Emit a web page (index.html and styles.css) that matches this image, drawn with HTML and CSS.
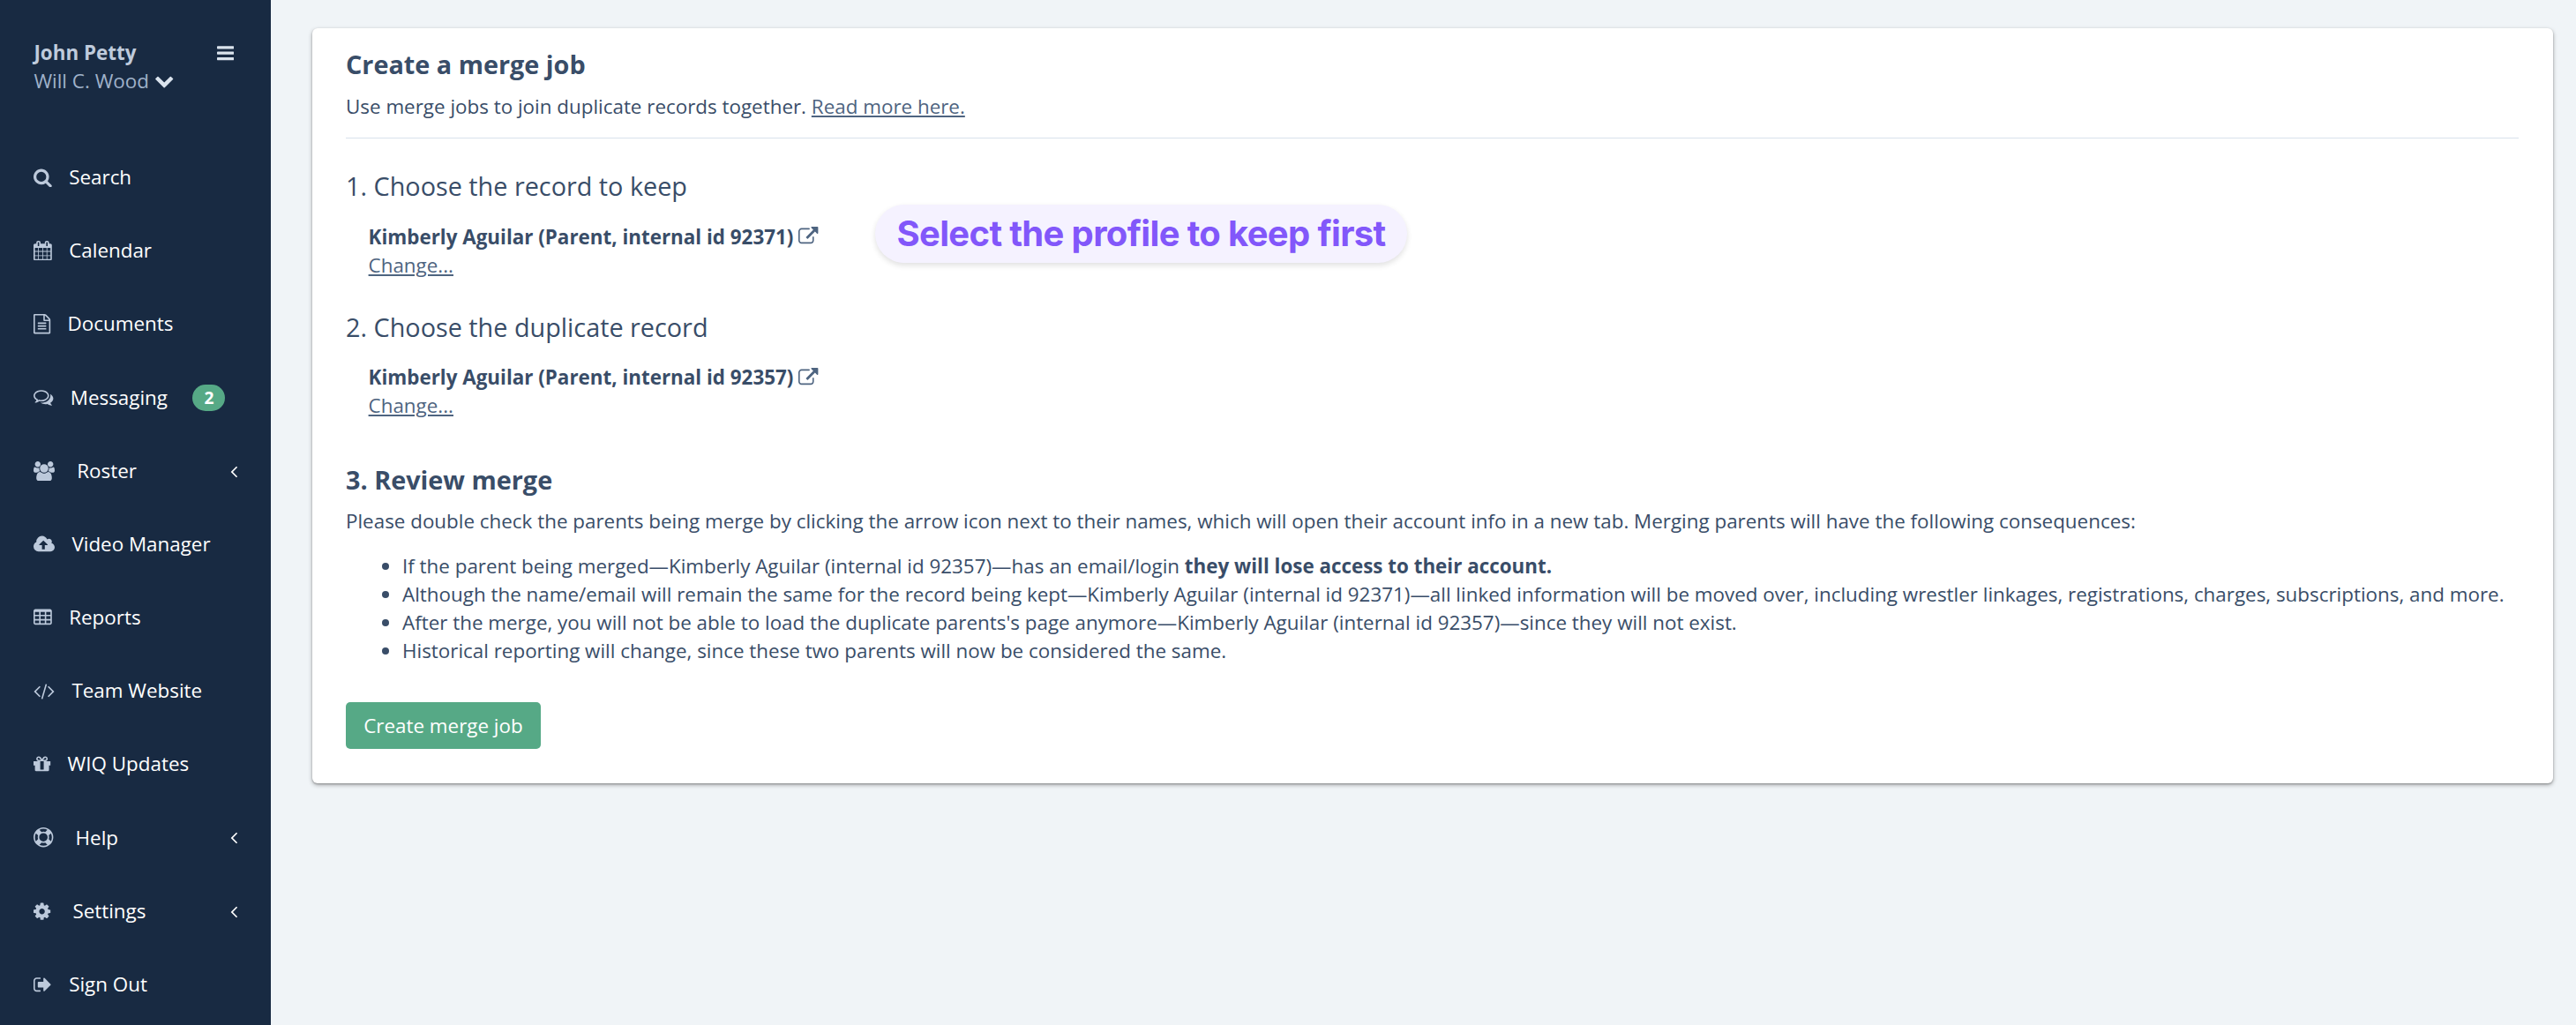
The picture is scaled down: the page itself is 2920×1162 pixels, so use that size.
FILE: index.html
```
<!DOCTYPE html>
<html lang="en">

<head>
    <meta charset="utf-8">
    <title>Create a merge job</title>
    <link rel="stylesheet" href="styles.css">
</head>

<body>
    <div class="sidebar">
        <div class="profile">
            <div>
                <div class="user-name">John Petty</div>
                <div class="team-name">Will C. Wood <svg class="icon chevron" viewBox="0 0 1792 1792"><path d="M1683 808l-742 741q-19 19-45 19t-45-19l-742-741q-19-19-19-45.500t19-45.500l166-165q19-19 45-19t45 19l531 531 531-531q19-19 45-19t45 19l166 165q19 19 19 45.500t-19 45.500z"/></svg></div>
            </div>
            <svg class="icon menu-toggle" viewBox="128 0 1536 1792"><path d="M1664 1344v128q0 26-19 45t-45 19h-1408q-26 0-45-19t-19-45v-128q0-26 19-45t45-19h1408q26 0 45 19t19 45zm0-512v128q0 26-19 45t-45 19h-1408q-26 0-45-19t-19-45v-128q0-26 19-45t45-19h1408q26 0 45 19t19 45zm0-512v128q0 26-19 45t-45 19h-1408q-26 0-45-19t-19-45v-128q0-26 19-45t45-19h1408q26 0 45 19t19 45z"/></svg>
        </div>

        <ul class="nav">
            <li>
                <svg class="icon w-1664" viewBox="64 0 1664 1792"><path d="M1216 832q0-185-131.500-316.500t-316.500-131.500-316.500 131.500-131.500 316.500 131.500 316.500 316.500 131.500 316.500-131.500 131.500-316.500zm512 832q0 52-38 90t-90 38q-54 0-90-38l-343-342q-179 124-399 124-143 0-273.500-55.500t-225-150-150-225-55.500-273.500 55.500-273.500 150-225 225-150 273.500-55.500 273.500 55.500 225 150 150 225 55.500 273.500q0 220-124 399l343 343q37 37 37 90z"/></svg>
                <span>Search</span>
            </li>
            <li>
                <svg class="icon w-1664" viewBox="64 0 1664 1792"><path d="M192 1664h288v-288h-288v288zm352 0h320v-288h-320v288zm-352-352h288v-320h-288v320zm352 0h320v-320h-320v320zm-352-384h288v-288h-288v288zm736 736h320v-288h-320v288zm-384-736h320v-288h-320v288zm768 736h288v-288h-288v288zm-384-352h320v-320h-320v320zm-352-864v-288q0-13-9.500-22.500t-22.500-9.500h-64q-13 0-22.500 9.500t-9.500 22.500v288q0 13 9.500 22.500t22.500 9.500h64q13 0 22.500-9.500t9.500-22.500zm736 864h288v-320h-288v320zm-384-384h320v-288h-320v288zm384 0h288v-288h-288v288zm32-480v-288q0-13-9.500-22.500t-22.500-9.500h-64q-13 0-22.500 9.500t-9.500 22.500v288q0 13 9.500 22.500t22.500 9.500h64q13 0 22.500-9.500t9.500-22.500zm384-64v1280q0 52-38 90t-90 38h-1408q-52 0-90-38t-38-90v-1280q0-52 38-90t90-38h128v-96q0-66 47-113t113-47h64q66 0 113 47t47 113v96h384v-96q0-66 47-113t113-47h64q66 0 113 47t47 113v96h128q52 0 90 38t38 90z"/></svg>
                <span>Calendar</span>
            </li>
            <li>
                <svg class="icon w-1536" viewBox="128 0 1536 1792"><path d="M1596 380q28 28 48 76t20 88v1152q0 40-28 68t-68 28h-1344q-40 0-68-28t-28-68v-1600q0-40 28-68t68-28h896q40 0 88 20t76 48zm-444-244v376h376q-10-29-22-41l-313-313q-12-12-41-22zm384 1528v-1024h-416q-40 0-68-28t-28-68v-416h-768v1536h1280zm-1024-864q0-14 9-23t23-9h704q14 0 23 9t9 23v64q0 14-9 23t-23 9h-704q-14 0-23-9t-9-23v-64zm736 224q14 0 23 9t9 23v64q0 14-9 23t-23 9h-704q-14 0-23-9t-9-23v-64q0-14 9-23t23-9h704zm0 256q14 0 23 9t9 23v64q0 14-9 23t-23 9h-704q-14 0-23-9t-9-23v-64q0-14 9-23t23-9h704z"/></svg>
                <span>Documents</span>
            </li>
            <li>
                <svg class="icon" viewBox="0 0 1792 1792"><path d="M704 384q-153 0-286 52t-211.500 141-78.500 191q0 82 53 158t149 132l97 56-35 84q34-20 62-39l44-31 53 10q78 14 153 14 153 0 286-52t211.500-141 78.500-191-78.500-191-211.500-141-286-52zm0-128q191 0 353.500 68.500t256.500 186.500 94 257-94 257-256.500 186.500-353.500 68.500q-86 0-176-16-124 88-278 128-36 9-86 16h-3q-11 0-20.500-8t-11.500-21q-1-3-1-6.500t.5-6.500 2-6l2.500-5 3.500-5.500 4-5 4.500-5 4-4.500q5-6 23-25t26-29.500 22.500-29 25-38.500 20.500-44q-124-72-195-177t-71-224q0-139 94-257t256.500-186.500 353.500-68.500zm822 1169q10 24 20.500 44t25 38.500 22.500 29 26 29.500 23 25q1 1 4 4.500t4.500 5 4 5 3.500 5.500l2.500 5 2 6 .5 6.500-1 6.500q-3 14-13 22t-22 7q-50-7-86-16-154-40-278-128-90 16-176 16-271 0-472-132 58 4 88 4 161 0 309-45t264-129q125-92 192-212t67-254q0-77-23-152 129 71 204 178t75 230q0 120-71 224.500t-195 176.500z"/></svg>
                <span>Messaging</span>
                <span class="badge">2</span>
            </li>
            <li class="has-children">
                <svg class="icon w-1920" viewBox="-64 0 1920 1792"><path d="M529 896q-162 5-265 128h-134q-82 0-138-40.500t-56-118.500q0-353 124-353 6 0 43.500 21t97.500 42.500 119 21.500q67 0 133-23-5 37-5 66 0 139 81 256zm1071 637q0 120-73 189.500t-194 69.500h-874q-121 0-194-69.500t-73-189.500q0-53 3.500-103.500t14-109 26.500-108.500 43-97.500 62-81 85.500-53.500 111.500-20q10 0 43 21.500t73 48 107 48 135 21.500 135-21.500 107-48 73-48 43-21.500q61 0 111.500 20t85.500 53.500 62 81 43 97.500 26.500 108.500 14 109 3.500 103.500zm-1024-1277q0 106-75 181t-181 75-181-75-75-181 75-181 181-75 181 75 75 181zm704 384q0 159-112.500 271.500t-271.500 112.500-271.500-112.500-112.500-271.500 112.500-271.500 271.500-112.500 271.500 112.500 112.500 271.500zm576 225q0 78-56 118.500t-138 40.500h-134q-103-123-265-128 81-117 81-256 0-29-5-66 66 23 133 23 59 0 119-21.500t97.500-42.500 43.500-21q124 0 124 353zm-128-609q0 106-75 181t-181 75-181-75-75-181 75-181 181-75 181 75 75 181z"/></svg>
                <span>Roster</span>
                <svg class="icon angle" viewBox="0 0 1792 1792"><path d="M1203 544q0 13-10 23l-393 393 393 393q10 10 10 23t-10 23l-50 50q-10 10-23 10t-23-10l-466-466q-10-10-10-23t10-23l466-466q10-10 23-10t23 10l50 50q10 10 10 23z"/></svg>
            </li>
            <li>
                <svg class="icon w-1920" viewBox="0 0 1920 1792"><path d="M1280 928q0-14-9-23l-352-352q-9-9-23-9t-23 9l-351 351q-10 12-10 24 0 14 9 23t23 9h224v352q0 13 9.500 22.500t22.500 9.500h192q13 0 22.500-9.500t9.500-22.500v-352h224q13 0 22.500-9.500t9.500-22.500zm640 224q0 159-112.500 271.500t-271.500 112.500h-1088q-185 0-316.500-131.500t-131.500-316.500q0-130 70-240t188-165q-2-30-2-43 0-212 150-362t362-150q156 0 285.500 87t188.500 231q71-62 166-62 106 0 181 75t75 181q0 76-41 138 130 31 213.500 135.500t83.500 238.500z"/></svg>
                <span>Video Manager</span>
            </li>
            <li>
                <svg class="icon w-1664" viewBox="0 0 1664 1792"><path fill-rule="evenodd" d="M160 128h1344q66 0 113 47t47 113v1088q0 66-47 113t-113 47h-1344q-66 0-113-47t-47-113v-1088q0-66 47-113t113-47zM128 384v256h384v-256zM640 384v256h384v-256zM1152 384v256h384v-256zM128 768v256h384v-256zM640 768v256h384v-256zM1152 768v256h384v-256zM128 1152v256h384v-256zM640 1152v256h384v-256zM1152 1152v256h384v-256z"/></svg>
                <span>Reports</span>
            </li>
            <li>
                <svg class="icon w-1920" viewBox="0 0 1920 1792"><path d="M617 1399l-50 50q-10 10-23 10t-23-10l-466-466q-10-10-10-23t10-23l466-466q10-10 23-10t23 10l50 50q10 10 10 23t-10 23l-393 393 393 393q10 10 10 23t-10 23zm591-1067l-373 1291q-4 13-15.500 19.500t-23.500 2.500l-62-17q-13-4-19.500-15.500t-2.500-24.500l373-1291q4-13 15.500-19.500t23.500-2.500l62 17q13 4 19.500 15.500t2.500 24.500zm657 651l-466 466q-10 10-23 10t-23-10l-50-50q-10-10-10-23t10-23l393-393-393-393q-10-10-10-23t10-23l50-50q10-10 23-10t23 10l466 466q10 10 10 23t-10 23z"/></svg>
                <span>Team Website</span>
            </li>
            <li>
                <svg class="icon w-1536" viewBox="128 0 1536 1792"><path d="M1056 1356v-716h-320v716q0 25 18 38.500t46 13.500h192q28 0 46-13.500t18-38.500zm-456-844h195l-126-161q-26-31-69-31-40 0-68 28t-28 68 28 68 68 28zm688-96q0-40-28-68t-68-28q-43 0-69 31l-125 161h194q40 0 68-28t28-68zm376 256v320q0 14-9 23t-23 9h-96v416q0 40-28 68t-68 28h-1088q-40 0-68-28t-28-68v-416h-96q-14 0-23-9t-9-23v-320q0-14 9-23t23-9h440q-93 0-158.500-65.500t-65.500-158.500 65.500-158.500 158.500-65.500q107 0 168 77l128 165 128-165q61-77 168-77 93 0 158.500 65.500t65.500 158.500-65.500 158.500-158.500 65.500h440q14 0 23 9t9 23z"/></svg>
                <span>WIQ Updates</span>
            </li>
            <li class="has-children">
                <svg class="icon" viewBox="0 0 1792 1792"><path d="M896 0q182 0 348 71t286 191 191 286 71 348-71 348-191 286-286 191-348 71-348-71-286-191-191-286-71-348 71-348 191-286 286-191 348-71zm0 128q-190 0-361 90l194 194q82-28 167-28t167 28l194-194q-171-90-361-90zm-678 1129l194-194q-28-82-28-167t28-167l-194-194q-90 171-90 361t90 361zm678 407q190 0 361-90l-194-194q-82 28-167 28t-167-28l-194 194q171 90 361 90zm0-384q159 0 271.500-112.500t112.500-271.500-112.500-271.500-271.500-112.500-271.500 112.500-112.500 271.500 112.500 271.500 271.500 112.500zm484-217l194 194q90-171 90-361t-90-361l-194 194q28 82 28 167t-28 167z"/></svg>
                <span>Help</span>
                <svg class="icon angle" viewBox="0 0 1792 1792"><path d="M1203 544q0 13-10 23l-393 393 393 393q10 10 10 23t-10 23l-50 50q-10 10-23 10t-23-10l-466-466q-10-10-10-23t10-23l466-466q10-10 23-10t23 10l50 50q10 10 10 23z"/></svg>
            </li>
            <li class="has-children">
                <svg class="icon w-1536" viewBox="128 0 1536 1792"><path d="M1152 896q0-106-75-181t-181-75-181 75-75 181 75 181 181 75 181-75 75-181zm512-109v222q0 12-8 23t-20 13l-185 28q-19 54-39 91 35 50 107 138 10 12 10 25t-9 23q-27 37-99 108t-94 71q-12 0-26-9l-138-108q-44 23-91 38-16 136-29 186-7 28-36 28h-222q-14 0-24.500-8.500t-11.500-21.500l-28-184q-49-16-90-37l-141 107q-10 9-25 9-14 0-25-11-126-114-165-168-7-10-7-23 0-12 8-23 15-21 51-66.500t54-70.500q-27-50-41-99l-183-27q-13-2-21-12.500t-8-23.500v-222q0-12 8-23t19-13l186-28q14-46 39-92-40-57-107-138-10-12-10-24 0-10 9-23 26-36 98.500-107.500t94.500-71.500q13 0 26 10l138 107q44-23 91-38 16-136 29-186 7-28 36-28h222q14 0 24.500 8.500t11.500 21.500l28 184q49 16 90 37l142-107q9-9 24-9 13 0 25 10 129 119 165 170 7 8 7 22 0 12-8 23-15 21-51 66.500t-54 70.500q26 50 41 98l183 28q13 2 21 12.500t8 23.500z"/></svg>
                <span>Settings</span>
                <svg class="icon angle" viewBox="0 0 1792 1792"><path d="M1203 544q0 13-10 23l-393 393 393 393q10 10 10 23t-10 23l-50 50q-10 10-23 10t-23-10l-466-466q-10-10-10-23t10-23l466-466q10-10 23-10t23 10l50 50q10 10 10 23z"/></svg>
            </li>
            <li>
                <svg class="icon w-1664" viewBox="64 0 1664 1792"><path d="M704 1440q0 4 1 20t.5 26.500-3 23.500-10 19.500-20.500 6.500h-320q-119 0-203.500-84.500t-84.500-203.500v-704q0-119 84.500-203.500t203.500-84.500h320q13 0 22.500 9.500t9.500 22.500q0 4 1 20t.5 26.500-3 23.500-10 19.500-20.500 6.500h-320q-66 0-113 47t-47 113v704q0 66 47 113t113 47h312l11.500 1 11.500 3 8 5.500 7 9 2 13.500zm928-544q0 26-19 45l-544 544q-19 19-45 19t-45-19-19-45v-288h-448q-26 0-45-19t-19-45v-384q0-26 19-45t45-19h448v-288q0-26 19-45t45-19 45 19l544 544q19 19 19 45z"/></svg>
                <span>Sign Out</span>
            </li>
        </ul>
    </div>

    <div class="content">
        <div class="card">
            <h3>Create a merge job</h3>
            <p class="intro">Use merge jobs to join duplicate records together. <a href="#">Read more here.</a></p>
            <hr>

            <h3 class="step">1. Choose the record to keep</h3>
            <div class="record">
                <strong>Kimberly Aguilar (Parent, internal id 92371)</strong>
                <svg class="icon external" viewBox="0 0 1792 1792"><path d="M1408 928v320q0 119-84.500 203.500t-203.500 84.500h-832q-119 0-203.500-84.500t-84.500-203.500v-832q0-119 84.500-203.500t203.500-84.500h704q14 0 23 9t9 23v64q0 14-9 23t-23 9h-704q-66 0-113 47t-47 113v832q0 66 47 113t113 47h832q66 0 113-47t47-113v-320q0-14 9-23t23-9h64q14 0 23 9t9 23zm384-864v512q0 26-19 45t-45 19-45-19l-176-176-652 652q-10 10-23 10t-23-10l-114-114q-10-10-10-23t10-23l652-652-176-176q-19-19-19-45t19-45 45-19h512q26 0 45 19t19 45z"/></svg>
                <br>
                <a href="#">Change...</a>
            </div>

            <h3 class="step">2. Choose the duplicate record</h3>
            <div class="record">
                <strong>Kimberly Aguilar (Parent, internal id 92357)</strong>
                <svg class="icon external" viewBox="0 0 1792 1792"><path d="M1408 928v320q0 119-84.500 203.500t-203.500 84.500h-832q-119 0-203.500-84.500t-84.500-203.500v-832q0-119 84.500-203.500t203.500-84.500h704q14 0 23 9t9 23v64q0 14-9 23t-23 9h-704q-66 0-113 47t-47 113v832q0 66 47 113t113 47h832q66 0 113-47t47-113v-320q0-14 9-23t23-9h64q14 0 23 9t9 23zm384-864v512q0 26-19 45t-45 19-45-19l-176-176-652 652q-10 10-23 10t-23-10l-114-114q-10-10-10-23t10-23l652-652-176-176q-19-19-19-45t19-45 45-19h512q26 0 45 19t19 45z"/></svg>
                <br>
                <a href="#">Change...</a>
            </div>

            <h3 class="review">3. Review merge</h3>
            <p>Please double check the parents being merge by clicking the arrow icon next to their names, which will open their account info in a new tab. Merging parents will have the following consequences:</p>
            <ul class="consequences">
                <li>If the parent being merged—Kimberly Aguilar (internal id 92357)—has an email/login <strong>they will lose access to their account.</strong></li>
                <li>Although the name/email will remain the same for the record being kept—Kimberly Aguilar (internal id 92371)—all linked information will be moved over, including wrestler linkages, registrations, charges, subscriptions, and more.</li>
                <li>After the merge, you will not be able to load the duplicate parents's page anymore—Kimberly Aguilar (internal id 92357)—since they will not exist.</li>
                <li>Historical reporting will change, since these two parents will now be considered the same.</li>
            </ul>
            <button>Create merge job</button>

            <div class="callout">Select the profile to keep first</div>
        </div>
    </div>
</body>

</html>
```

FILE: styles.css
```
* {
    margin: 0;
    padding: 0;
    box-sizing: border-box;
}

body {
    display: flex;
    min-height: 100vh;
    background-color: #f0f4f7;
    color: #394d68;
    font-family: 'Open Sans', sans-serif;
    font-size: 22.4px;
    line-height: 32px;
}

a {
    color: #4e6480;
    text-decoration: underline;
}

.icon {
    width: 22.4px;
    height: 22.4px;
    fill: currentColor;
    flex-shrink: 0;
}

.w-1536 {
    width: 19.2px;
}

.w-1664 {
    width: 20.8px;
}

.w-1920 {
    width: 24px;
}

/* Sidebar */
.sidebar {
    width: 307px;
    height: 1162px;
    flex-shrink: 0;
    overflow: hidden;
    background-color: #182a42;
}

.profile {
    display: flex;
    justify-content: space-between;
    height: 159.4px;
    padding: 44.3px 42px 0 38.4px;
}

.user-name {
    color: #bfcbdc;
    font-weight: bold;
}

.team-name {
    color: #9fb1c9;
}

.chevron {
    margin-bottom: -2px;
    color: #dae3ed;
}

.menu-toggle {
    width: 19.2px;
    margin-top: 4.5px;
    color: #dae3ed;
}

.nav {
    list-style: none;
}

.nav li {
    display: flex;
    align-items: center;
    gap: 19px;
    height: 83.2px;
    padding: 0 31px 0 38.4px;
    color: #fff;
}

.nav .has-children {
    gap: 24.8px;
}

.nav .icon {
    color: #bcc9db;
}

.nav .angle {
    margin-left: auto;
    color: #fff;
}

.badge {
    margin-left: 9.5px;
    padding: 0 13px;
    border-radius: 16px;
    background-color: #56a986;
    font-size: 19.2px;
    font-weight: bold;
    line-height: 30px;
}

/* Main card */
.content {
    flex: 1;
    padding: 32px 26px 0 47px;
}

.card {
    position: relative;
    height: 856px;
    padding: 25px 39px 0 38px;
    border-radius: 6px;
    background-color: #fff;
    box-shadow: 0 2px 5px rgba(0, 0, 0, 0.3), 0 1px 2px rgba(0, 0, 0, 0.25);
}

h3 {
    font-size: 28.8px;
    font-weight: bold;
    line-height: 32px;
}

.intro {
    margin-top: 16px;
}

hr {
    margin-top: 19px;
    border: none;
    border-top: 1px solid #d9e2ec;
}

.step {
    margin-top: 38px;
    font-weight: normal;
}

.record {
    margin: 25.5px 0 0 25.6px;
}

.external {
    margin-bottom: -3px;
    color: #4e6480;
}

.review {
    margin: 52px 0 15px;
}

.consequences {
    margin-top: 19px;
    padding-left: 64px;
}

button {
    height: 53px;
    margin-top: 42px;
    padding: 0 20.2px;
    border: none;
    border-radius: 5px;
    background-color: #56a986;
    color: #fff;
    font-family: inherit;
    font-size: 22.4px;
}

.callout {
    position: absolute;
    top: 200px;
    left: 638px;
    width: 603px;
    height: 66px;
    border-radius: 33px;
    background-color: #f5f2ff;
    box-shadow: 0 3px 6px rgba(0, 0, 0, 0.12);
    color: #8257fa;
    font-family: 'Inter', sans-serif;
    font-size: 40px;
    font-weight: 650;
    letter-spacing: -0.65px;
    line-height: 66px;
    text-align: center;
    white-space: nowrap;
}
```
